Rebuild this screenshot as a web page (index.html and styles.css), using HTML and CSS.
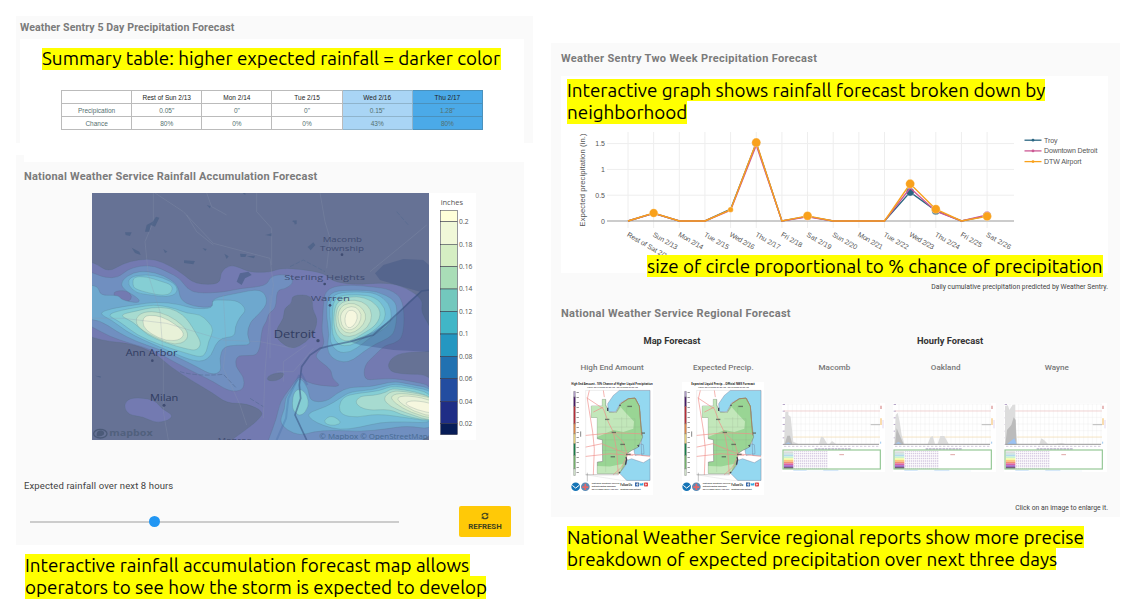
FILE: index.html
```html
<!DOCTYPE html>
<html lang="en">
<head>
<meta charset="utf-8">
<title>Weather Sentry Precipitation Forecast</title>
<link rel="stylesheet" href="styles.css">
</head>
<body>
<main class="page">
  <div class="col-left">
    <section class="panel summary">
      <h2 class="title">Weather Sentry 5 Day Precipitation Forecast</h2>
      <div class="summary-body">
        <p class="note note-summary"><span class="mark m1">Summary table: higher expected rainfall = darker color</span></p>
        <table class="forecast">
          <tr><th></th><th>Rest of Sun 2/13</th><th>Mon 2/14</th><th>Tue 2/15</th><th class="mid">Wed 2/16</th><th class="high">Thu 2/17</th></tr>
          <tr><td>Precipication</td><td>0.05"</td><td>0"</td><td>0"</td><td class="mid">0.15"</td><td class="high">1.28"</td></tr>
          <tr><td>Chance</td><td>80%</td><td>0%</td><td>0%</td><td class="mid">43%</td><td class="high">80%</td></tr>
        </table>
      </div>
    </section>
    <section class="panel accumulation">
      <div class="strip"></div>
      <h2 class="title">National Weather Service Rainfall Accumulation Forecast</h2>
      <svg class="rain-map" viewBox="36 24 1152 741">
        <rect x="36" y="24" width="1152" height="741" fill="#fff"/>
        <svg x="36" y="24" width="1011" height="741" viewBox="36 24 1011 741">
          <rect x="36" y="24" width="1011" height="741" fill="#667295"/>
          <g id="contours"></g>
          <path d="M885 265L910 240L970 222L1030 225L1047 240V500L940 495L840 480L810 470L880 440L940 400L985 350L1020 320L950 300L900 285Z" fill="#2d4a7a" opacity=".3"/>
          <path d="M1047 315L1025 318L980 360L920 415L880 450L810 470L760 480L720 490L690 510L665 545L658 600L662 640L645 690L680 765" fill="none" stroke="#38507e" stroke-width="5" opacity=".55"/>
          <path d="M658 570L625 640L618 700L590 765M664 565L682 600" fill="none" stroke="#38609a" stroke-width="6" opacity=".25"/>
          <g fill="none" stroke="#8c99b0" stroke-width="2" opacity=".4">
            <path d="M220 24V110L195 170L205 270L240 380L250 520L250 680L265 765M225 24L310 80L400 175L570 220L580 300L570 380L555 560L550 700M380 24L395 65L440 90M530 24L530 80L575 130V240M320 90L350 140L400 180M480 24H490M36 400H130L260 415L430 465L540 470L640 490M430 330L438 480L430 550L480 660L500 720M720 24L735 110L750 160L740 250M1040 120L980 170L870 260M570 330V520M590 560H640L700 490M610 590V530L680 480"/>
          </g>
          <g fill="#465d84" opacity=".65">
            <path d="M218 110L228 95L238 98L225 125L212 120L208 140H195L200 120ZM135 142L155 142L150 153L137 150ZM155 188L178 200L182 210L165 204ZM312 226L345 228L340 238L312 234ZM368 190L380 192L376 198ZM380 60L392 64L390 70ZM640 105L650 112L645 120ZM556 150L575 145L574 154ZM683 186L700 172L706 180L692 196ZM433 206L446 214L440 222ZM480 206L500 208L496 216H482ZM470 290L480 265L505 260L515 270L495 280L485 300ZM500 214L525 212L522 220ZM488 24H496V30ZM45 572L62 574V578ZM684 186L700 178ZM636 108L650 106V118ZM250 192L262 200L255 204Z"/>
          </g>
          <path d="M300 560Q350 575 430 568L470 610M510 640L550 665M630 245L670 225L735 260M950 80L985 120" fill="none" stroke="#50688d" stroke-width="3" stroke-dasharray="14 5" opacity=".5"/>
          <g class="places">
            <text x="728" y="170" textLength="118" lengthAdjust="spacingAndGlyphs">Macomb</text>
            <text x="720" y="197" textLength="132" lengthAdjust="spacingAndGlyphs">Township</text>
            <text x="613" y="284" textLength="242" lengthAdjust="spacingAndGlyphs">Sterling Heights</text>
            <text x="692" y="348" textLength="118" lengthAdjust="spacingAndGlyphs">Warren</text>
            <text x="581" y="459" textLength="126" lengthAdjust="spacingAndGlyphs" class="city">Detroit</text>
            <text x="137" y="514" textLength="155" lengthAdjust="spacingAndGlyphs" class="town">Ann Arbor</text>
            <text x="210" y="648" textLength="85" lengthAdjust="spacingAndGlyphs" class="town">Milan</text>
            <text x="413" y="775" textLength="102" lengthAdjust="spacingAndGlyphs">Monroe</text>
            <circle cx="786" cy="209" r="4"/><circle cx="734" cy="297" r="4"/><circle cx="750" cy="361" r="4"/><circle cx="714" cy="467" r="5"/><circle cx="217" cy="527" r="4"/><circle cx="252" cy="661" r="4.500"/>
          </g>
          <g opacity=".75"><ellipse cx="61" cy="746" rx="20" ry="13" fill="none" stroke="#42536f" stroke-width="4"/><path d="M50 754Q48 736 63 736Q76 739 71 749Q64 756 50 754Z" fill="#42536f"/><text x="88" y="754" textLength="130" lengthAdjust="spacingAndGlyphs" class="brand">mapbox</text></g>
          <text x="718" y="761" textLength="325" lengthAdjust="spacingAndGlyphs" class="credit">© Mapbox © OpenStreetMap</text>
        </svg>
        <g id="colorbar"></g>
      </svg>
      <p class="slider-label">Expected rainfall over next 8 hours</p>
      <div class="controls">
        <div class="slider"><span class="thumb"></span></div>
        <button class="refresh"><svg viewBox="0 0 16 16"><path d="M2 7Q3 2.500 8 2.500Q10.500 2.500 12.500 4.500M14 9Q13 13.500 8 13.500Q5.500 13.500 3.500 11.500" fill="none" stroke="currentColor" stroke-width="2.400"/><path d="M14.500 1.500V7H9ZM1.500 14.500V9H7Z" fill="currentColor"/></svg>REFRESH</button>
      </div>
    </section>
    <p class="note note-map"><span class="mark m2">Interactive rainfall accumulation forecast map allows</span><span class="mark m3">operators to see how the storm is expected to develop</span></p>
  </div>

  <div class="col-right">
    <section class="panel outlook">
      <h2 class="title">Weather Sentry Two Week Precipitation Forecast</h2>
      <div class="graph-box">
        <p class="note note-graph"><span class="mark m4">Interactive graph shows rainfall forecast broken down by</span><span class="mark m5">neighborhood</span></p>
        <svg class="graph" id="graph" viewBox="561 124 547 149"></svg>
        <p class="note note-circle"><span class="mark m6">size of circle proportional to % chance of precipitation</span></p>
      </div>
      <p class="caption">Daily cumulative precipitation predicted by Weather Sentry.</p>
      <h2 class="title regional-title">National Weather Service Regional Forecast</h2>
      <div class="groups"><h3 class="g-map">Map Forecast</h3><h3 class="g-hour">Hourly Forecast</h3></div>
      <div class="reports">
        <figure><figcaption>High End Amount</figcaption>
          <svg class="thumb-map" viewBox="33 20 246 340">
            <g id="region">
              <rect x="33" y="20" width="246" height="340" fill="#fff"/>
              <path d="M77 45H270V315H185L77 298Z" fill="#fff" stroke="#ccc" stroke-width="1"/>
              <path d="M143 85L160 60L178 45H270V240H245L240 110L228 70L205 70L182 82L168 108L145 110ZM220 215L235 203L250 208L252 235L225 240ZM200 255L215 250L250 262L270 250V315H200L178 293L198 268Z" fill="#94d8f0" stroke="#668" stroke-width="1"/>
              <path d="M127 72H137V88L145 110L168 112L182 85L205 70L225 68L238 92L243 150L248 185L235 215L215 225L200 235L198 265L178 294H112V260L128 258L127 193L112 190V126H94V92H127Z" fill="#99d594" stroke="#777" stroke-width="1.500"/>
              <path d="M112 126H94V92H127V72H136V90L148 112L170 112L182 95L195 110L222 138L220 160L190 170L160 164L112 185ZM112 272L150 273L190 265L178 294H112Z" fill="#c2e7ba"/>
              <path d="M182 85L205 70L225 68L238 92L245 180" fill="none" stroke="#a28a65" stroke-width="3"/>
              <path d="M137 72V290M160 130H225V225M112 155H240M127 193H238M127 225H205M185 125V225M200 90V155" stroke="#8a9b87" fill="none" opacity=".5"/>
              <path d="M88 45L82 70L98 170L103 220L100 298M80 67L130 100L145 140L160 170L170 225L175 298M77 180L160 172L245 175M77 215L125 205L200 235L270 243M77 243L150 235L220 240M160 170L190 200L202 240L185 275L160 298M100 110L130 95M130 45L133 65" fill="none" stroke="#ef8d89" stroke-width="3" opacity=".65"/>
              <path d="M198 245L200 252L196 268M233 209L237 213M143 97V107M180 92V88M177 293L180 290" stroke="#445" stroke-width="4" fill="none"/>
              <path d="M77 298H175M82 292V318" stroke="#555" fill="none"/>
              <g fill="#576157" opacity=".8"><rect x="135" y="130" width="13" height="4"/><rect x="202" y="91" width="14" height="4"/><rect x="155" y="169" width="13" height="4"/><rect x="181" y="205" width="14" height="4"/><rect x="198" y="235" width="14" height="4"/><rect x="152" y="242" width="13" height="4"/><rect x="245" y="171" width="10" height="4"/></g>
              <g stroke="#555"><path fill="#b9a5d4" d="M41 48H46V65H41Z"/><path fill="#4a176b" d="M41 65H46V93H41Z"/><path fill="#c22c37" d="M41 93H46V145H41Z"/><path fill="#ee8b46" d="M41 145H46V175H41Z"/><path fill="#f4df83" d="M41 175H46V205H41Z"/><path fill="#158447" d="M41 205H46V240H41Z"/><path fill="#78bd70" d="M41 240H46V280H41Z"/><path fill="#dcefd5" d="M41 280H46V300H41Z"/></g>
              <path d="M53 50V302" stroke="#999" stroke-width="7" stroke-dasharray="3 12"/>
              <path d="M62 168V184" stroke="#888" stroke-width="3"/>
              <circle cx="47" cy="334" r="13" fill="#1574b6"/><path d="M37 330L47 338L57 330" stroke="#fff" stroke-width="3" fill="none"/>
              <circle cx="76" cy="334" r="13" fill="#5c8bb5"/><path d="M67 335H85M76 325V344" stroke="#e76666" stroke-width="5"/>
              <g class="tiny"><text x="95" y="326" textLength="84">National Weather Service</text><text x="95" y="335" textLength="72">Detroit/Pontiac Michigan</text><text x="95" y="345" textLength="80">02/13/2022 05:21 AM EST</text><text x="181" y="331" textLength="36" class="follow">Follow Us:</text><text x="181" y="344" textLength="61">weather.gov/detroit</text></g>
              <rect x="225" y="321" width="12" height="12" fill="#3767aa"/><path d="M232 332V323H236M228 327H235" stroke="#fff" stroke-width="2"/><path d="M239 330L250 330L250 322L243 325L239 322Z" fill="#39a8df"/><rect x="252" y="321" width="12" height="12" rx="2" fill="#df4c4c"/><path d="M256 324L261 327L256 330Z" fill="#fff"/>
            </g>
            <g class="tiny head"><text x="34" y="30" textLength="244" lengthAdjust="spacingAndGlyphs">High End Amount - 10% Chance of Higher Liquid Precipitation</text><text x="82" y="39" textLength="152" class="sub">Valid: 02/13/2022 07:00 AM - 02/16/2022 07:00 AM</text></g>
          </svg>
        </figure>
        <figure><figcaption>Expected Precip.</figcaption>
          <svg class="thumb-map" viewBox="33 20 246 340"><use href="#region"/><g class="tiny head"><text x="61" y="30" textLength="190" lengthAdjust="spacingAndGlyphs">Expected Liquid Precip. - Official NWS Forecast</text><text x="82" y="39" textLength="152" class="sub">Valid: 02/13/2022 07:00 AM - 02/16/2022 07:00 AM</text></g></svg>
        </figure>
        <figure><figcaption>Macomb</figcaption><svg class="thumb-hour" viewBox="36 39 309 207"></svg></figure>
        <figure><figcaption>Oakland</figcaption><svg class="thumb-hour" viewBox="36 39 309 207"></svg></figure>
        <figure><figcaption>Wayne</figcaption><svg class="thumb-hour" viewBox="36 39 309 207"></svg></figure>
      </div>
      <p class="enlarge">Click on an image to enlarge it.</p>
    </section>
    <p class="note note-regional"><span class="mark m7">National Weather Service regional reports show more precise</span><span class="mark m8">breakdown of expected precipitation over next three days</span></p>
  </div>
</main>
<script src="charts.js"></script>
</body>
</html>
```
FILE: styles.css
```css
* { box-sizing: border-box; }
body { margin: 0; background: #fff; font-family: Roboto, sans-serif; color: #424242; }
h2, h3, p, figure { margin: 0; }
svg { display: block; }
.page { display: flex; width: 1135px; height: 614px; overflow: hidden; }
.col-left { width: 517px; margin-left: 16px; padding-top: 16px; }
.col-right { width: 569px; margin-left: 18px; padding-top: 43px; }
.panel { background: #fafafa; }
.title { font-size: 11px; line-height: 14px; font-weight: 700; color: #7b7b7b; letter-spacing: .33px; white-space: nowrap; }

.summary { height: 127px; padding: 4px 9px 0 4px; }
.summary .title { height: 19px; padding-top: 1px; font-size: 10.600px; letter-spacing: .1px; }
.summary-body { height: 104px; background: #fff; padding-top: 9px; }
.note { font-family: Ubuntu, "Noto Sans", sans-serif; color: #000; font-size: 18.850px; }
.mark { display: block; width: max-content; height: 22.300px; line-height: 22px; background: #ff0; white-space: nowrap; }
.note-summary { padding-left: 22px; }
.m1 { width: 458.500px; line-height: 21px; }
.m2 { width: 445px; }
.m3 { width: 461px; }
.m4 { width: 478px; }
.m5 { width: 120px; }
.m6 { width: 456px; }
.m7 { width: 517px; }
.m8 { width: 489px; }

.forecast { width: 422px; margin: 20px 0 0 41px; border-collapse: collapse; table-layout: fixed; font: 6.500px "Liberation Sans", sans-serif; }
.forecast th, .forecast td { height: 13px; padding: 1px 0 0; border: 1px solid #bbb; text-align: center; line-height: 8px; font-weight: 400; color: #54706f; }
.forecast th { color: #222; }
.forecast .mid { background: #a9d5f5; border-color: #8fb4cc; }
.forecast .high { background: #4baae8; border-color: #4a91bd; }

.accumulation { width: 508px; height: 390px; margin-top: 12px; }
.strip { height: 7px; margin-left: 8px; background: #fff; }
.accumulation .title { padding: 8px 0 0 8px; height: 31px; letter-spacing: .2px; }
.rain-map { width: 384px; height: 247px; margin-left: 76px; }
.places { font-family: "Open Sans", sans-serif; font-size: 22px; fill: #3f4c71; }
.places .city { font-size: 30px; fill: #303c61; }
.places .town { font-size: 26px; fill: #303c61; }
.brand { font: 700 26px "Open Sans", sans-serif; fill: #4a5b76; }
.credit { font: 21px "Open Sans", sans-serif; fill: #3e6388; opacity: .8; }
.bar-text { font: 20px "Open Sans", sans-serif; fill: #555; }
.slider-label { margin: 40px 0 0 8px; font-size: 9.500px; line-height: 12px; letter-spacing: .12px; }
.controls { display: flex; align-items: center; height: 31px; margin: 14px 0 0 14px; }
.slider { width: 369px; height: 2px; background: #ccc; display: flex; align-items: center; }
.thumb { width: 11px; height: 11px; margin-left: 119px; border-radius: 50%; background: #2196f3; }
.refresh { width: 52px; height: 31px; margin-left: 60px; padding: 0; border: 0; border-radius: 2px; background: #ffc907; color: #40431f; font: 700 7.800px/11px Roboto, sans-serif; display: flex; flex-direction: column; align-items: center; justify-content: center; gap: 1px; }
.refresh svg { width: 8px; height: 8px; }
.note-map { margin: 9px 0 0 9px; }

.outlook { height: 473.500px; padding: 9px 12px 0 10px; }
.outlook > .title { height: 23.500px; }
.graph-box { position: relative; height: 197.500px; background: #fff; padding-top: 3.500px; }
.note-graph { padding-left: 6px; height: 45px; }
.graph { width: 547px; height: 149px; }
.note-circle { position: absolute; left: 86px; top: 179.500px; }
.graph text { font: 7px "Liberation Sans", sans-serif; fill: #555; }
.graph .axis-title { font-size: 7.600px; }
.caption { margin-top: 9px; text-align: right; font-size: 6.800px; line-height: 10px; }
.outlook > .regional-title { margin-top: 15px; height: 14px; letter-spacing: .31px; }
.groups { display: grid; grid-template-columns: 222px 334px; margin: 14px 0 0 0; height: 12px; text-align: center; }
.groups h3 { font-size: 9.300px; line-height: 12px; font-weight: 700; color: #333; }
.reports { display: grid; grid-template-columns: repeat(5, 111.200px); width: 556px; margin: 15px 0 0 -4.500px; height: 129px; }
.reports figcaption { font-size: 8.100px; line-height: 10px; font-weight: 500; color: #777; text-align: center; }
.thumb-map { width: 82px; height: 113.500px; margin: 9.500px auto 0; }
.thumb-hour { width: 103px; height: 69px; margin: 30.500px 0 0 3px; }
.tiny text { font: 700 7px "Open Sans", sans-serif; fill: #555; }
.tiny .follow { font-size: 8px; fill: #333; }
.head text { font-size: 8px; fill: #222; }
.head .sub { font-size: 6px; fill: #555; }
.enlarge { margin-top: 12px; text-align: right; font-size: 6.800px; line-height: 10px; }
.note-regional { margin: 9px 0 0 16px; }
```
FILE: charts.js
```js
// Closed outline with rounded corners through the midpoints of a point list.
function outline(points, dx) {
  const p = points.split(' ').map(s => s.split(',').map(Number)).map(([x, y]) => [x + dx, y]);
  const mid = (a, b) => [(a[0] + b[0]) / 2, (a[1] + b[1]) / 2];
  let d = 'M' + mid(p[p.length - 1], p[0]);
  p.forEach((q, i) => { d += 'Q' + q + ' ' + mid(q, p[(i + 1) % p.length]); });
  return d + 'Z';
}
const shades = ['#667295', '#737ab1', '#708fc0', '#6ea8ce', '#75bdd7', '#85ced4', '#a7dbd0', '#c4e4cd', '#d8ebcd', '#e8f1d8', '#f6f7df'];
const areas = [
  [1, 0, '0,225 45,233 85,262 130,235 175,224 225,222 275,245 310,268 345,297 420,299 422,260 450,239 480,248 510,262 570,262 600,250 660,252 735,265 755,288 820,300 920,292 980,308 1030,345 1022,380 1047,418 1080,500 990,500 940,512 920,545 945,568 1080,568 1080,800 440,800 440,775 490,740 535,705 552,680 500,655 440,655 400,625 340,590 270,545 220,500 150,475 90,470 36,458 0,440'],
  [0, 0, '636,330 697,330 697,375 713,400 705,440 680,470 636,495 600,470 588,455 590,430 612,400 612,370 636,355'],
  [0, 0, '562,575 580,566 612,562 610,575 590,588 562,587'],
  [1, 0, '130,660 150,638 200,640 230,650 245,672 280,690 265,707 225,714 190,695 145,690'],
  [2, 0, '0,250 50,268 75,278 115,278 140,255 180,242 225,243 265,262 300,280 320,310 350,325 430,322 480,310 560,303 570,275 600,268 635,272 640,295 615,312 590,315 588,370 565,385 560,410 545,430 538,510 500,512 470,512 465,545 492,575 492,610 470,620 440,615 400,590 360,570 290,535 220,495 150,475 90,455 36,425 0,410'],
  [1, 0, '95,320 140,315 158,335 145,352 115,347'],
  [2, 540, '195,320 225,303 280,300 330,305 390,312 432,345 432,455 400,477 375,480 345,510 313,540 312,585 350,583 400,580 450,588 530,605 530,800 15,800 25,765 50,700 60,650 90,610 118,570 135,590 180,602 247,606 215,580 215,555 175,525 165,510 195,480 185,440 188,400 190,360'],
  [3, 0, '0,298 55,302 60,332 115,330 125,345 175,355 180,342 125,310 125,285 160,262 200,258 250,270 295,300 300,345 340,365 400,368 395,340 470,325 545,310 565,350 540,385 510,410 500,450 515,480 470,480 430,485 418,520 425,560 395,570 350,545 300,520 230,490 170,470 110,440 60,405 0,400'],
  [4, 0, '55,385 95,370 165,360 230,350 300,358 340,372 400,370 395,345 430,345 475,347 500,375 480,395 465,425 465,455 425,458 405,480 395,510 370,530 330,525 260,495 190,465 140,440 95,405'],
  [4, 0, '143,300 150,275 200,268 250,278 290,300 292,325 260,337 215,330 170,325'],
  [5, 0, '158,300 160,275 200,275 240,288 278,300 275,325 250,332 210,325 165,312'],
  [5, 0, '80,390 120,376 200,362 240,360 290,372 320,385 360,388 385,410 402,435 385,470 380,500 365,518 320,505 240,480 170,450 120,410'],
  [6, 0, '115,390 170,378 215,367 270,368 310,390 330,415 345,440 365,475 350,497 320,492 260,475 200,450 160,410'],
  [7, 0, '165,400 190,380 240,380 290,405 325,440 320,468 285,480 240,465 175,430'],
  [9, 0, '188,424 190,393 225,390 265,403 314,440 304,464 260,469 213,447'],
  [3, 540, '200,350 215,318 290,315 350,318 405,345 412,380 405,440 385,460 350,475 310,500 280,525 250,533 215,520 200,490 208,450 200,400'],
  [4, 540, '210,350 228,323 300,320 350,325 388,355 396,395 385,425 340,450 310,475 270,503 232,502 208,470 214,430 208,390'],
  [5, 540, '218,355 235,332 290,328 345,335 377,370 375,405 350,430 310,460 270,484 235,480 216,450 217,400'],
  [6, 540, '223,365 245,340 290,333 335,345 365,380 350,420 310,445 270,470 240,465 221,430'],
  [7, 540, '228,375 245,350 285,343 323,358 338,390 325,427 285,453 250,456 227,425'],
  [8, 540, '234,380 250,358 283,353 312,373 320,402 300,432 270,447 246,437 234,410'],
  [9, 540, '242,385 260,366 288,364 306,388 298,418 275,437 250,432 241,405'],
  [10, 540, '256,390 266,374 288,378 294,400 280,425 263,430 254,412'],
  [3, 540, '75,640 100,605 120,575 145,610 150,650 200,650 230,625 270,605 330,607 400,588 450,598 530,612 530,735 440,722 380,732 300,740 220,735 160,740 120,752 80,735 58,710 75,670'],
  [4, 540, '140,685 200,665 240,640 270,620 340,615 400,595 450,605 530,620 530,715 430,710 360,712 300,727 240,735 190,722 155,705'],
  [5, 540, '96,655 102,620 122,610 142,630 147,665 124,695 100,680'],
  [5, 540, '235,665 250,635 290,625 360,618 400,600 530,625 530,712 440,698 350,686 290,698 245,690'],
  [5, 540, '190,706 215,690 247,712 225,722 200,719'],
  [6, 540, '283,655 300,632 340,632 380,622 400,607 530,635 530,712 430,692 390,672 320,677'],
  [7, 540, '368,640 395,617 440,620 530,637 530,714 440,684 390,665'],
  [8, 540, '390,635 415,624 470,630 530,642 530,706 450,682 405,655'],
  [9, 540, '402,640 440,630 530,648 530,698 460,680'],
  [10, 540, '430,655 460,645 530,658 530,688 470,675']
];
document.getElementById('contours').innerHTML = areas.map(([level, dx, pts]) =>
  `<path d="${outline(pts, dx)}" fill="${shades[level]}" stroke="#4d6b72" stroke-opacity=".38" stroke-width="1.6"/>`).join('');

// Colour scale beside the map.
const scale = [['#ffffd9', 76, 110], ['#f0f8d8', 110, 178], ['#d5eec3', 178, 245], ['#a9ddb7', 245, 312], ['#73c8bd', 312, 380], ['#41b6c7', 380, 447], ['#2497c1', 447, 515], ['#2171b1', 515, 581], ['#234da0', 581, 649], ['#1f2d86', 649, 716], ['#081d58', 716, 749]];
const ticks = ['0.2', '0.18', '0.16', '0.14', '0.12', '0.1', '0.08', '0.06', '0.04', '0.02'];
document.getElementById('colorbar').innerHTML =
  '<text class="bar-text" x="1082" y="61" textLength="67" lengthAdjust="spacingAndGlyphs">inches</text>' +
  scale.map(([c, a, b]) => `<rect x="1082" y="${a}" width="50" height="${b - a}" fill="${c}" stroke="#334" stroke-width="1.5"/>`).join('') +
  ticks.map((t, i) => `<text class="bar-text" x="1137" y="${scale[i][2] + 7}" textLength="${t.length === 3 ? 29 : 40}">${t}</text>`).join('');

// Two week line graph.
const days = ['Rest of Sat 2/12', 'Sun 2/13', 'Mon 2/14', 'Tue 2/15', 'Wed 2/16', 'Thu 2/17', 'Fri 2/18', 'Sat 2/19', 'Sun 2/20', 'Mon 2/21', 'Tue 2/22', 'Wed 2/23', 'Thu 2/24', 'Fri 2/25', 'Sat 2/26'];
const X = i => 628 + i * 25.65, Y = v => 221 - v * 51.6;
const series = [
  ['Troy', '#2b6682', [0, .15, 0, 0, .23, 1.51, 0, .09, 0, 0, 0, .56, .2, 0, .1], [0, 3, 0, 0, 2, 4, 0, 3.5, 0, 0, 0, 4, 4, 0, 4]],
  ['Downtown Detroit', '#cc5994', [0, .15, 0, 0, .21, 1.47, 0, .08, 0, 0, 0, .64, .19, 0, .12], [0, 3, 0, 0, 2, 0, 0, 3.5, 0, 0, 0, 0, 0, 0, 3.5]],
  ['DTW Airport', '#f9a11b', [0, .155, 0, 0, .22, 1.52, 0, .1, 0, 0, 0, .72, .23, 0, .09], [0, 4.3, 0, 0, 2.7, 4.5, 0, 4.4, 0, 0, 0, 4.5, 4.4, 0, 4.4]]
];
let g = '';
days.forEach((t, i) => {
  g += `<path d="M${X(i)} 132V228" stroke="#eee"/><text transform="translate(${X(i) - 1.5} 236) rotate(30)" textLength="${i === 0 ? 49 : t.startsWith('Fri') ? 23.5 : 27.5}">${t}</text>`;
});
[[0, '0'], [.5, '0.5'], [1, '1'], [1.5, '1.5']].forEach(([v, t]) => {
  g += `<path d="M607 ${Y(v)}H1014" stroke="${v ? '#eee' : '#bbb'}" stroke-width="${v ? 1 : 1.6}"/><text x="605" y="${Y(v) + 2.5}" text-anchor="end">${t}</text>`;
});
series.forEach(([name, color, values, sizes], k) => {
  g += `<polyline points="${values.map((v, i) => X(i) + ',' + Y(v)).join(' ')}" fill="none" stroke="${color}" stroke-width="1.4"/>`;
  values.forEach((v, i) => { if (sizes[i]) g += `<circle cx="${X(i)}" cy="${Y(v)}" r="${sizes[i]}" fill="${color}" stroke="#fff" stroke-width=".3"/>`; });
  const y = 140.2 + k * 10.7;
  g += `<path d="M1024.500 ${y}H1041.500" stroke="${color}" stroke-width="1.3"/><circle cx="1033" cy="${y}" r="1.4" fill="${color}"/><text x="1044" y="${y + 2.500}" textLength="${[13.5, 53.5, 37.5][k]}">${name}</text>`;
});
g += '<text class="axis-title" transform="translate(585 226.500) rotate(-90)" textLength="93">Expected precipitation (in.)</text>';
document.getElementById('graph').innerHTML = g;

// Hourly report thumbnails.
const peaks = [
  '<path d="M42 164L46 65H55V75L62 80L70 155L85 162ZM147 162L153 140L160 142L172 162ZM178 162L186 153L198 162Z" fill="#ddd"/><path d="M44 163L52 137H60L67 163Z" fill="#bbb"/><path d="M44 163L55 157L66 163Z" fill="#a9c8ee"/>',
  '<path d="M40 164L44 75L50 68L56 95L62 135L70 162ZM140 162L148 142L155 138L162 162ZM170 162L178 138H190L203 162Z" fill="#ddd"/><path d="M42 163L47 115L58 140L68 163Z" fill="#bbb"/><path d="M42 163L52 155L64 163Z" fill="#a9c8ee"/>',
  '<path d="M39 164V48L48 46L52 60L62 44H70V85L76 163ZM142 162L148 145L156 150L168 162ZM188 162L210 159L220 162Z" fill="#ddd"/><path d="M40 163L45 120L58 105L65 82L71 90L73 163Z" fill="#bbb"/><path d="M44 163L67 145L74 163Z" fill="#9bc2f3"/>'
];
const rows = ['#ddd', '#cfe5e2', '#b3d9ee', '#c9f5cb', '#f7f7a4', '#fbc87c', '#f29177', '#dc61a4', '#a168c9', '#716078'];
document.querySelectorAll('.thumb-hour').forEach((el, n) => {
  let s = '<rect x="36" y="39" width="309" height="207" fill="#fff"/>';
  for (let x = 54; x < 330; x += 13) s += `<path d="M${x} 42V164" stroke="#e8e8e8"/>`;
  for (let y = 42; y < 164; y += 20) s += `<path d="M40 ${y}H330" stroke="#e8e8e8"/><rect x="38" y="${y}" width="7" height="3" fill="#b8a7c9"/>`;
  s += '<path d="M42 63H330" stroke="#f2c4c4" stroke-width="2"/><path d="M42 141H330" stroke="#f7dfb0" stroke-width="2"/>' + peaks[n];
  s += '<path d="M40 163H327" stroke="#999" stroke-width="3"/><path d="M42 169H325" stroke="#bbb0ca" stroke-width="2" stroke-dasharray="7 5"/><path d="M134 177H244" stroke="#9b88b4" stroke-width="3" stroke-dasharray="8 2"/>';
  s += '<path d="M333 47V57" stroke="#d99" stroke-width="4"/><path d="M333 85V105" stroke="#f6cb87" stroke-width="4"/><path d="M339 90V115" stroke="#d5c3e6" stroke-width="2"/><path d="M302 104H330" stroke="#bbb" stroke-width="3"/><path d="M332 155V161" stroke="#9cc8ef" stroke-width="3"/>';
  rows.forEach((c, i) => { s += `<rect x="41" y="${184 + i * 5.2}" width="29" height="5.4" fill="${c}"/>`; });
  for (let x = 74; x < 175; x += 6) s += `<path d="M${x} 184V236" stroke="#cdbfdc" stroke-width="4" stroke-dasharray="3 2" opacity=".8"/>`;
  s += '<path d="M208 194H222" stroke="#e0a7a7" stroke-width="3"/><path d="M70 241H110M160 241H205" stroke="#b2d5f5" stroke-width="2"/><path d="M110 243H270" stroke="#d6e8f6"/><rect x="39" y="180" width="292" height="57" fill="none" stroke="#93c794" stroke-width="3.5"/>';
  el.innerHTML = s;
});
```
